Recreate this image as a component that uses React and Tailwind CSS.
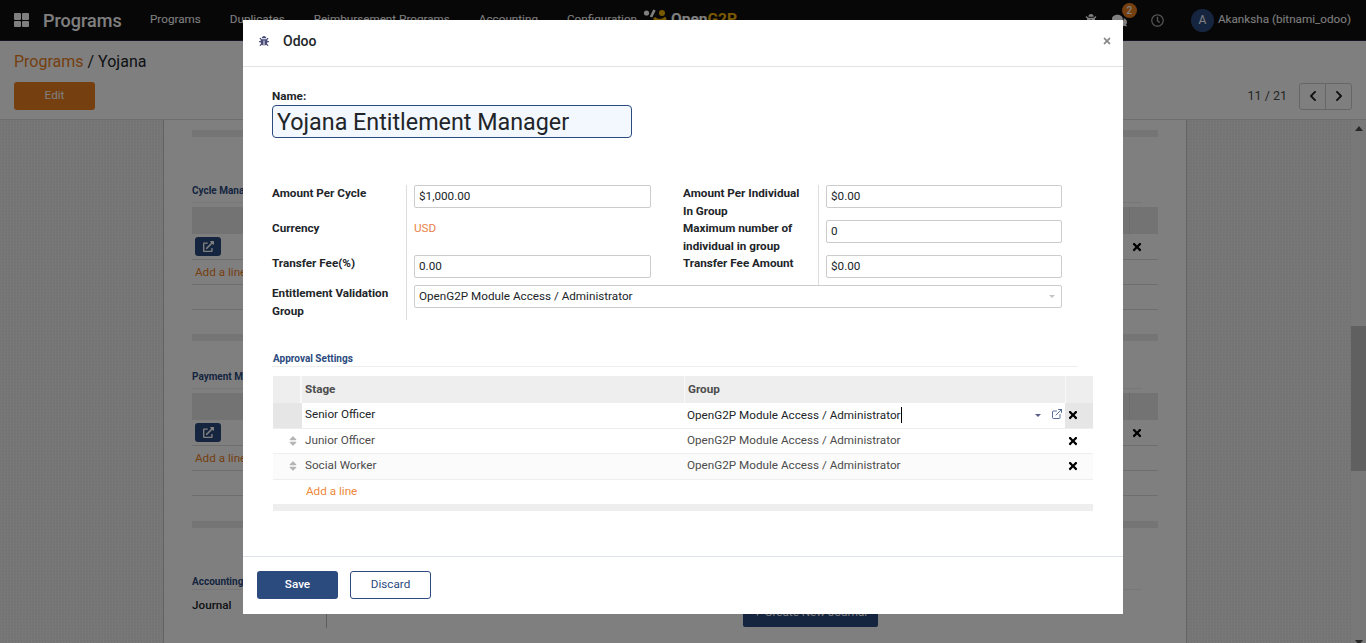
import { FaBug, FaChevronLeft, FaChevronRight, FaComments, FaExternalLinkAlt, FaPlus, FaRegClock, FaSort, FaTimes } from "react-icons/fa";
import { ExternalLink } from "lucide-react";

const navLinks = ["Programs", "Duplicates", "Reimbursement Programs", "Accounting", "Configuration"];

const approvalRows = [
  { stage: "Junior Officer", group: "OpenG2P Module Access / Administrator", bg: "bg-white" },
  { stage: "Social Worker", group: "OpenG2P Module Access / Administrator", bg: "bg-[#fbfbfb]" },
];

function NavBar() {
  return (
    <div className="flex h-[41px] items-center border-b border-[#2a2340] bg-[#0f0f0f] text-[11.7px] text-white">
      <div className="ml-[14px] grid h-[14px] w-[15px] grid-cols-2 gap-[1px]">
        <span className="rounded-[1px] bg-white" />
        <span className="rounded-[1px] bg-white" />
        <span className="rounded-[1px] bg-white" />
        <span className="rounded-[1px] bg-white" />
      </div>
      <span className="ml-[14px] w-[107px] text-[18px] font-medium">Programs</span>
      <div className="flex w-[487px] gap-[29px] whitespace-nowrap">
        {navLinks.map((link) => (
          <span key={link}>{link}</span>
        ))}
      </div>
      <svg width="24" height="24" viewBox="0 0 24 24" className="ml-[6px]">
        <circle cx="3.5" cy="5" r="2.6" fill="#fff" />
        <path d="M11.5 2 L8 9" stroke="#fff" strokeWidth="2.6" fill="none" />
        <circle cx="19" cy="5" r="3" fill="#f4b400" />
        <path d="M11 10 Q16 15 23 10" stroke="#f4b400" strokeWidth="3" fill="none" />
      </svg>
      <span className="ml-[4px] text-[15.5px] font-bold">
        Open<span className="text-[#f4b400]">G2P</span>
      </span>
      <div className="ml-auto flex items-center">
        <FaBug className="text-[12px] text-white" />
        <div className="relative ml-[15px]">
          <FaComments className="text-[15px] text-white" />
          <span className="absolute -top-[10px] left-[10px] flex h-[15px] w-[15px] items-center justify-center rounded-full bg-[#ea7e1e] text-[10px] font-medium">
            2
          </span>
        </div>
        <FaRegClock className="ml-[24px] text-[13px] text-[#aaaaaa]" />
        <span className="ml-[27px] flex h-[23px] w-[23px] items-center justify-center rounded-full bg-[#2b4a7e] text-[12px]">
          A
        </span>
        <span className="ml-[4px] mr-[15px]">Akanksha (bitnami_odoo)</span>
      </div>
    </div>
  );
}

function ControlPanel() {
  return (
    <div className="h-[79px] border-b border-[#dddddd] bg-white px-[14px] pt-[10px]">
      <div className="text-[16px] leading-[21px] text-[#212529]">
        <span className="text-[#ea7e1e]">Programs</span> / Yojana
      </div>
      <div className="mt-[10px] flex items-center">
        <button className="h-[28px] w-[81px] rounded-[3px] bg-[#ea7e1e] pb-[1px] text-[11.7px] text-white">Edit</button>
        <span className="ml-auto text-[12.5px] text-[#4c4c4c]">11 / 21</span>
        <div className="ml-[12px] flex h-[27px] w-[53px] rounded-[3px] border border-[#cccccc]">
          <span className="flex flex-1 items-center justify-center border-r border-[#cccccc]">
            <FaChevronLeft className="text-[12px] text-[#212529]" />
          </span>
          <span className="flex flex-1 items-center justify-center">
            <FaChevronRight className="text-[12px] text-[#212529]" />
          </span>
        </div>
      </div>
    </div>
  );
}

function BackTable({ title, topGap }) {
  return (
    <div className={topGap}>
      <div className="w-[950px] border-b border-[#eeeeee] pb-[4px] text-[10px] font-bold leading-[14px] text-[#2b4a7e]">{title}</div>
      <div className="mt-[4px] flex h-[27px] justify-end bg-[#e6e6e6]">
        <span className="w-[29px] border-l border-[#d8d8d8]" />
      </div>
      <div className="flex h-[26px] items-center justify-between border-b border-[#dddddd] pl-[3px] pr-[15px]">
        <span className="flex h-[19px] w-[26px] items-center justify-center rounded-[3px] bg-[#2b4a7e]">
          <FaExternalLinkAlt className="text-[11px] text-white" />
        </span>
        <FaTimes className="text-[12px] text-black" />
      </div>
      <div className="flex h-[25px] items-center border-b border-[#dddddd] pl-[3px] pt-[1px] text-[11.7px] text-[#ea7e1e]">Add a line</div>
      <div className="h-[25px] border-b border-[#dddddd]" />
    </div>
  );
}

function BackSheet() {
  return (
    <div className="flex h-[523px] overflow-hidden bg-[repeating-conic-gradient(#f0f0f0_0%_25%,#e6e6e6_0%_50%)] bg-[length:3px_3px]">
      <div className="w-[163px] shrink-0" />
      <div className="w-[1024px] shrink-0 border-x border-[#c8c8c8] bg-white px-[28px] pt-[10px]">
        <div className="h-[7px] bg-[#ebebeb]" />
        <BackTable title="Cycle Manager" topGap="mt-[47px]" />
        <div className="mt-[24px] h-[7px] bg-[#ebebeb]" />
        <BackTable title="Payment Manager" topGap="mt-[29px]" />
        <div className="mt-[25px] h-[7px] bg-[#ebebeb]" />
        <div className="mt-[46px] w-[950px] border-b border-[#eeeeee] text-[10px] font-bold leading-[15px] text-[#2b4a7e]">Accounting</div>
        <div className="mt-[6px] flex text-[11.7px] font-medium text-[#212529]">
          <span className="w-[134px] leading-[18px]">Journal</span>
          <div className="h-[32px] border-l border-[#bbbbbb] pl-[416px]">
            <span className="mt-[2px] flex h-[29px] w-[135px] items-center justify-center gap-[4px] rounded-[2px] bg-[#2b4a7e] font-normal text-white">
              <FaPlus className="text-[7px]" />
              Create New Journal
            </span>
          </div>
        </div>
      </div>
      <div className="flex-1" />
      <div className="flex w-[15px] shrink-0 flex-col bg-[#f1f1f1]">
        <span className="mx-auto mt-[6px] h-0 w-0 border-x-[4px] border-b-[5px] border-x-transparent border-b-[#505050]" />
        <div className="mt-[195px] h-[145px] bg-[#c1c1c1]" />
        <span className="mx-auto mt-auto -mb-[2px] h-0 w-0 border-x-[4px] border-t-[5px] border-x-transparent border-t-[#505050]" />
      </div>
    </div>
  );
}

function FieldLabel({ children, className = "" }) {
  return <div className={`text-[11.7px] font-bold leading-[17.5px] text-[#212529] ${className}`}>{children}</div>;
}

function TextInput({ value }) {
  return (
    <div className="flex h-[23px] items-center rounded-[2px] border border-[#cccccc] px-[4px] text-[11.7px] text-[#212529]">
      {value}
    </div>
  );
}

function FormRow({ leftLabel, left, rightLabel, right, height = "h-[35px]" }) {
  return (
    <div className={`flex ${height}`}>
      <FieldLabel className="w-[134px]">{leftLabel}</FieldLabel>
      <div className="w-[277px] border-l border-[#dddddd] pl-[7px]">
        <div className="w-[237px]">{left}</div>
      </div>
      <FieldLabel className="w-[135px]">{rightLabel}</FieldLabel>
      <div className="w-[244px] border-l border-[#dddddd] pl-[7px]">
        <div className="w-[236px]">{right}</div>
      </div>
    </div>
  );
}

function ApprovalTable() {
  return (
    <div className="mt-[9px] w-[820px] text-[11.7px] text-[#4c4c4c]">
      <div className="grid h-[27px] grid-cols-[29px_382px_381px_28px] items-center bg-[#eeeeee] font-bold text-[#4c4c4c]">
        <span className="h-full border-r-2 border-[#f8f8f8]" />
        <span className="pl-[3px]">Stage</span>
        <span className="flex h-full items-center border-l border-[#f8f8f8] pl-[3px]">Group</span>
        <span className="h-full border-l border-[#f8f8f8]" />
      </div>
      <div className="grid h-[25.5px] grid-cols-[29px_382px_381px_28px] items-center border-b border-[#eeeeee]">
        <span className="h-full bg-[#e6e6e6]" />
        <span className="pl-[3px] text-[#212529]">Senior Officer</span>
        <div className="flex h-full items-center pl-[3px] pr-[2px] text-[#212529]">
          <span className="border-r border-black leading-[16px]">OpenG2P Module Access / Administrator</span>
          <span className="ml-auto h-0 w-0 border-x-[3px] border-t-[3px] border-x-transparent border-t-[#5b5b8c]" />
          <ExternalLink size={12} strokeWidth={1.6} className="ml-[10px] mb-[3px] text-[#2b4a7e]" />
        </div>
        <span className="flex h-full items-center bg-[#e6e6e6] pl-[2px]">
          <FaTimes className="text-[12px] text-black" />
        </span>
      </div>
      {approvalRows.map((row) => (
        <div key={row.stage} className={`grid h-[25.5px] grid-cols-[29px_382px_381px_28px] items-center border-b border-[#eeeeee] ${row.bg}`}>
          <span className="flex justify-center pl-[11px]">
            <FaSort className="text-[12px] text-[#b5b5b5]" />
          </span>
          <span className="pl-[3px]">{row.stage}</span>
          <span className="pl-[3px]">{row.group}</span>
          <span className="flex pl-[2px]">
            <FaTimes className="text-[12px] text-black" />
          </span>
        </div>
      ))}
      <div className="flex h-[24px] items-center pl-[33px] text-[#ee883a]">Add a line</div>
      <div className="h-[7px] bg-[#eeeeee]" />
    </div>
  );
}

function Modal() {
  return (
    <div className="absolute left-[243px] top-[20px] flex h-[594px] w-[880px] flex-col bg-white">
      <div className="flex h-[47px] shrink-0 items-center border-b border-[#e3e3e3] pb-[4px] pl-[16px] pr-[11px]">
        <FaBug className="text-[10px] text-[#4b4b7a]" />
        <span className="ml-[14px] text-[14px] font-medium text-[#212529]">Odoo</span>
        <FaTimes className="ml-auto text-[10px] text-[#8a8a8a]" />
      </div>
      <div className="flex-1 pl-[29px] pt-[21px]">
        <FieldLabel className="h-[17px]">Name:</FieldLabel>
        <div className="flex h-[33px] w-[360px] items-center rounded-[4px] border border-[#2b4a7e] bg-[#f3f7fe] pl-[4px] pt-[2px] text-[23.3px] text-[#212529]">
          Yojana Entitlement Manager
        </div>
        <div className="mt-[47px]">
          <FormRow
            leftLabel="Amount Per Cycle"
            left={<TextInput value="$1,000.00" />}
            rightLabel={<>Amount Per Individual<br />In Group</>}
            right={<TextInput value="$0.00" />}
          />
          <FormRow
            leftLabel="Currency"
            left={<div className="text-[11.7px] leading-[17.5px] text-[#e8824a]">USD</div>}
            rightLabel={<>Maximum number of<br />individual in group</>}
            right={<TextInput value="0" />}
          />
          <FormRow
            leftLabel="Transfer Fee(%)"
            left={<TextInput value="0.00" />}
            rightLabel="Transfer Fee Amount"
            right={<TextInput value="$0.00" />}
            height="h-[30px]"
          />
          <div className="flex h-[35px]">
            <FieldLabel className="w-[134px]">Entitlement Validation Group</FieldLabel>
            <div className="border-l border-[#dddddd] pl-[7px]">
              <div className="flex h-[23px] w-[648px] items-center rounded-[2px] border border-[#cccccc] pl-[4px] pr-[6px] text-[11.7px] text-[#212529]">
                OpenG2P Module Access / Administrator
                <span className="ml-auto h-0 w-0 border-x-[3px] border-t-[3px] border-x-transparent border-t-[#c4c4c4]" />
              </div>
            </div>
          </div>
        </div>
        <div className="mt-[31px] w-[806px] border-b border-[#eeeeee] pb-[1px] pl-[1px] pt-[1px] text-[10px] font-bold leading-[13px] text-[#2b4a7e]">
          Approval Settings
        </div>
        <div className="pl-[1px]">
          <ApprovalTable />
        </div>
      </div>
      <div className="flex h-[58px] shrink-0 items-center gap-[12px] border-t border-[#dfe3ea] pb-[2px] pl-[14px] text-[11.7px]">
        <button className="h-[28px] w-[81px] rounded-[3px] bg-[#2b4a7e] font-medium text-white">Save</button>
        <button className="h-[28px] w-[81px] rounded-[3px] border border-[#2b4a7e] text-[#2b4a7e]">Discard</button>
      </div>
    </div>
  );
}

export default function App() {
  return (
    <div className="relative h-[643px] w-[1366px] overflow-hidden font-['Roboto',sans-serif]">
      <NavBar />
      <ControlPanel />
      <BackSheet />
      {/* backdrop */}
      <div className="absolute inset-0 bg-black/50" />
      <Modal />
    </div>
  );
}
